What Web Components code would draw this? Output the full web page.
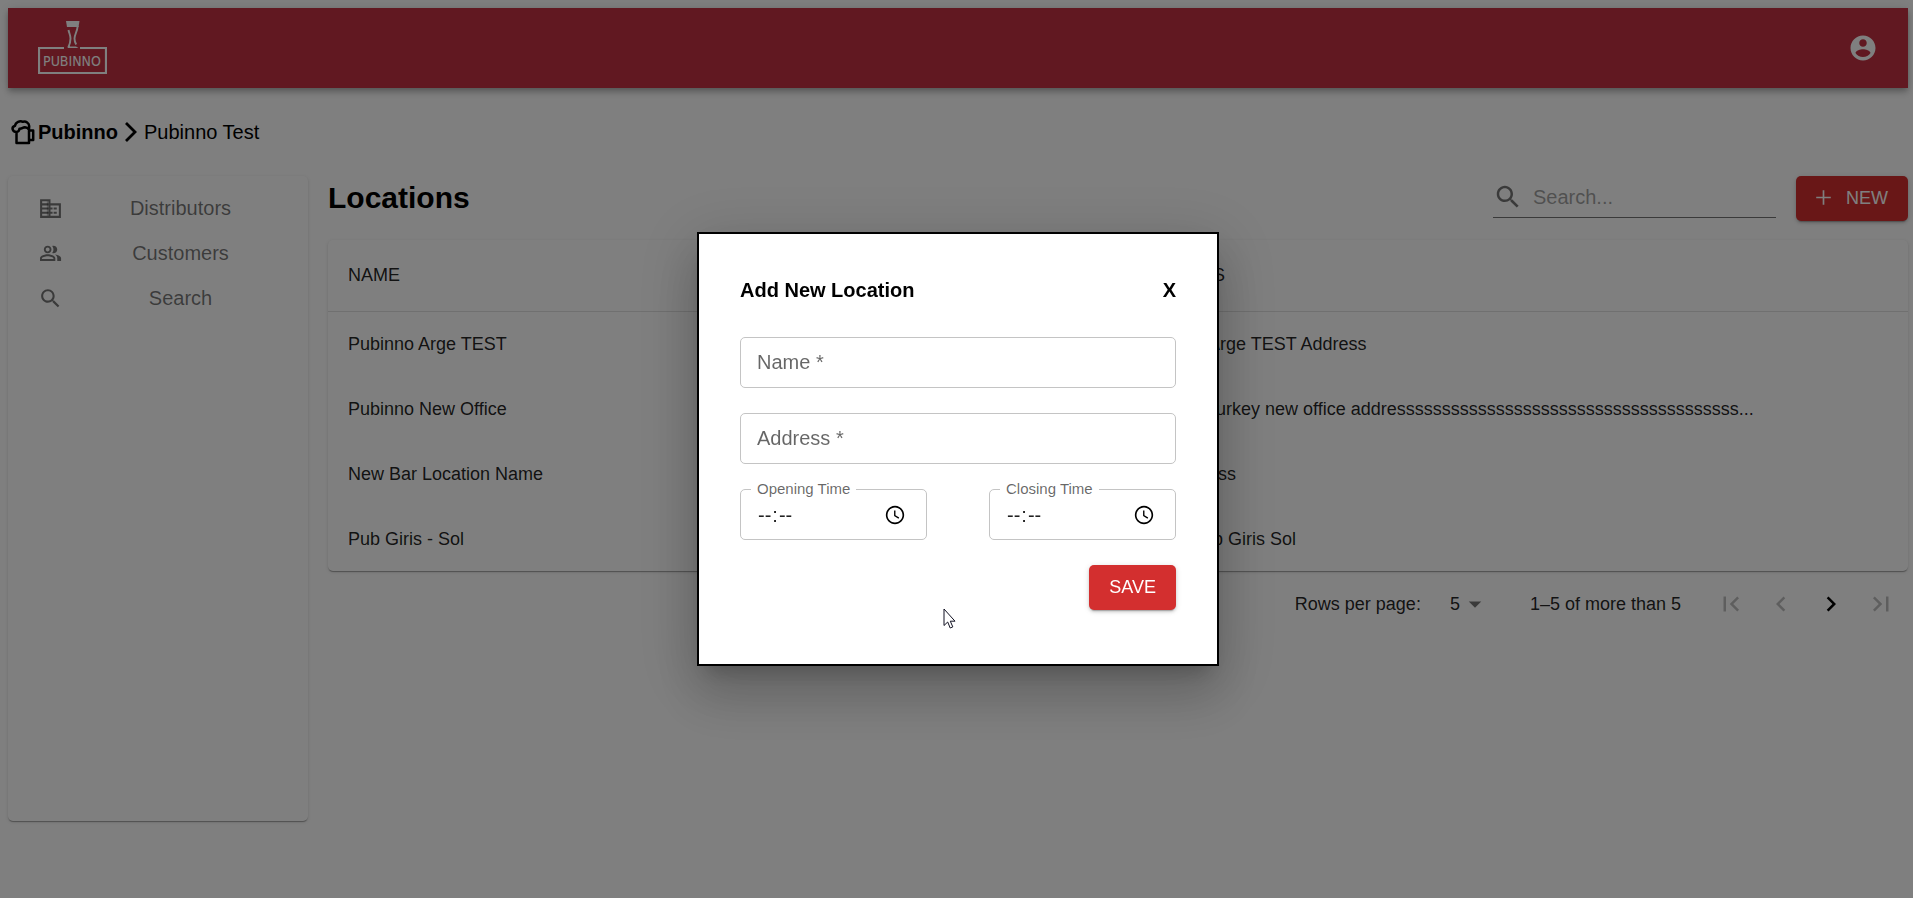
<!DOCTYPE html>
<html lang="en">
<head>
<meta charset="utf-8">
<meta name="viewport" content="width=device-width, initial-scale=1">
<title>Pubinno – Locations</title>
<style>
  html, body { margin: 0; height: 100%; }
  body { background: #fff; font-family: "Liberation Sans", Arial, sans-serif; color: rgba(0,0,0,.87); overflow: hidden; }
</style>
</head>
<body>
<pub-app>
  <pub-header slot="header"></pub-header>
  <pub-breadcrumb slot="crumbs" root="Pubinno" current="Pubinno Test"></pub-breadcrumb>
  <pub-sidebar slot="side">
    <pub-nav-item icon="business">Distributors</pub-nav-item>
    <pub-nav-item icon="people">Customers</pub-nav-item>
    <pub-nav-item icon="search">Search</pub-nav-item>
  </pub-sidebar>
  <pub-toolbar>Locations</pub-toolbar>
  <pub-locations></pub-locations>
  <pub-pagination></pub-pagination>
</pub-app>
<pub-modal heading="Add New Location">
  <pub-field label="Name *"></pub-field>
  <pub-field label="Address *"></pub-field>
  <pub-time-field slot="times" label="Opening Time"></pub-time-field>
  <pub-time-field slot="times" label="Closing Time"></pub-time-field>
  <pub-button slot="actions">SAVE</pub-button>
</pub-modal>
<pub-cursor></pub-cursor>

<script>
const ICONS = {
  business: '<path d="M12 7V3H2v18h20V7H12zM10 19H4v-2h6v2zm0-4H4v-2h6v2zm0-4H4V9h6v2zm0-4H4V5h6v2zm10 12h-8v-2h2v-2h-2v-2h2v-2h-2V9h8v10zm-2-8h-3v2h3v-2zm0 4h-3v2h3v-2z"/><path d="M8.500 5h1v14h-1z" opacity=".5"/>',
  people: '<path d="M16.67 13.13C18.04 14.06 19 15.32 19 17v3h4v-3c0-2.18-3.57-3.47-6.33-3.87zM15 12c2.21 0 4-1.79 4-4s-1.79-4-4-4c-.47 0-.91.1-1.33.24C14.5 5.27 15 6.58 15 8s-.5 2.73-1.33 3.76c.42.14.86.24 1.33.24zM9 12c2.21 0 4-1.79 4-4s-1.79-4-4-4-4 1.79-4 4 1.79 4 4 4zm0-6c1.1 0 2 .9 2 2s-.9 2-2 2-2-.9-2-2 .9-2 2-2zm0 7c-2.67 0-8 1.34-8 4v3h16v-3c0-2.66-5.33-4-8-4zm6 5H3v-.99C3.2 16.29 6.3 15 9 15s5.8 1.29 6 2v1z" transform="translate(1 .8) scale(.92)"/>',
  search: '<path d="M15.5 14h-.79l-.28-.27C15.41 12.59 16 11.11 16 9.5 16 5.91 13.09 3 9.5 3S3 5.91 3 9.5 5.91 16 9.5 16c1.61 0 3.09-.59 4.23-1.57l.27.28v.79l5 4.99L20.49 19l-4.99-5zm-6 0C7.01 14 5 11.99 5 9.5S7.01 5 9.5 5 14 7.01 14 9.5 11.99 14 9.5 14z"/>',
  account: '<path d="M12 2C6.48 2 2 6.48 2 12s4.48 10 10 10 10-4.48 10-10S17.52 2 12 2zm0 3c1.66 0 3 1.34 3 3s-1.34 3-3 3-3-1.34-3-3 1.34-3 3-3zm0 14.2c-2.5 0-4.71-1.28-6-3.22.03-1.99 4-3.08 6-3.08 1.99 0 5.97 1.09 6 3.08-1.29 1.94-3.5 3.22-6 3.22z"/>',
  add: '<path d="M19 12.800h-6.200v6.200h-1.600v-6.200H5v-1.600h6.200V5h1.600v6.200H19v1.600z"/>',
  drop: '<path d="M7 10l5 5 5-5z"/>',
  first: '<path d="M18.41 16.59L13.82 12l4.59-4.59L17 6l-6 6 6 6zM6 6h2v12H6z"/>',
  prev: '<path d="M15.41 16.59L10.830 12l4.580-4.590L14 6l-6 6 6 6z"/>',
  next: '<path d="M8.590 16.590L13.170 12 8.590 7.410 10 6l6 6-6 6z"/>',
  last: '<path d="M5.59 7.41L10.18 12l-4.59 4.59L7 18l6-6-6-6zM16 6h2v12h-2z"/>',
  clock: '<path d="M12 2C6.5 2 2 6.5 2 12s4.5 10 10 10 10-4.500 10-10S17.500 2 12 2zm0 18.200c-4.500 0-8.200-3.700-8.200-8.200S7.500 3.800 12 3.800s8.200 3.700 8.200 8.200-3.700 8.200-8.200 8.200zm.5-13.200H11v6l4.800 3 .8-1.200-4.100-2.500z"/>'
};
const icon = (name, size = 30) =>
  `<svg viewBox="0 0 24 24" width="${size}" height="${size}" fill="currentColor" aria-hidden="true">${ICONS[name]}</svg>`;

class Base extends HTMLElement {
  connectedCallback() {
    if (this.shadowRoot) return;
    this.attachShadow({ mode: 'open' }).innerHTML =
      `<style>*{box-sizing:border-box}svg{display:block;flex:none}button,input,select{font:inherit;color:inherit}${this.css()}</style>${this.html()}`;
  }
}

customElements.define('pub-app', class extends Base {
  css() { return `
    :host{display:block;padding:8px 5px 0 8px}
    .body{display:grid;grid-template-columns:300px minmax(0,1fr);gap:20px;align-items:start}
    .side{display:grid;min-height:645px}`; }
  html() { return `<slot name="header"></slot><slot name="crumbs"></slot>
    <div class="body"><div class="side"><slot name="side"></slot></div><main><slot></slot></main></div>`; }
});

customElements.define('pub-header', class extends Base {
  css() { return `
    :host{display:block}
    header{height:80px;padding:0 30px;display:flex;align-items:center;justify-content:space-between;background:#c33143;color:#fff;
      box-shadow:0 2px 5px -1px rgba(0,0,0,.2),0 5px 6px 0 rgba(0,0,0,.14),0 1px 12px 0 rgba(0,0,0,.12)}
    text{font:14px "Liberation Sans Narrow","DejaVu Sans Condensed",sans-serif}
    button{border:0;background:none;padding:0;cursor:pointer}`; }
  html() { return `<header>
    <svg viewBox="0 0 69 54" width="69" height="54" role="img" aria-label="Pubinno">
      <path d="M28 0h13.500l-1 6h-11.500z" fill="#fff"/>
      <path d="M39.700 5c-.5 6-3.200 8.500-3.200 12.500 0 2.800.5 4.200 1.700 6M30.500 9c.5 3 2 5 2 8.500 0 4-.8 6-2.200 8.800" fill="none" stroke="#fff" stroke-width="1.900"/>
      <path d="M29.500 27c1-2 2.500-3.500 2.500-1.500h6l2.500 1.500z" fill="#fff"/>
      <path d="M26 27H1v25h67V27H42" fill="none" stroke="#fff" stroke-width="2.200"/>
      <text x="34" y="45" text-anchor="middle" fill="#fff">PUBINNO</text>
    </svg>
    <button aria-label="Account">${icon('account')}</button></header>`; }
});

customElements.define('pub-breadcrumb', class extends Base {
  css() { return `
    :host{display:block}
    nav{display:flex;align-items:center;height:88px;padding-left:3px;font-size:20px;line-height:24px;color:#000}
    a{display:flex;align-items:center;gap:2px;font-weight:700;color:inherit;text-decoration:none}
    .sep{margin:0 7px}`; }
  html() { return `<nav aria-label="Breadcrumb">
    <a href="#"><svg viewBox="0 0 25 26" width="25" height="26" fill="none" stroke="#000" stroke-width="2.500" stroke-linejoin="round">
      <path d="M5.500 13v11h12.500V10.500M18 11.500h4.200v9.500H18M5.500 13c-4.500 0-5.300-5-1.500-6.200C4.500 3 9 1.200 12 2.800c3-.8 6 1.200 6.200 4.200l-.2 3.500M5.500 13c1.500 0 2.700-1 3-3.300 2.500.3 2.500-1.200 5.500-1.500 1.500 0 3 .8 4 2.300"/></svg>${this.getAttribute('root')}</a>
    <svg class="sep" viewBox="0 0 12 20" width="12" height="20" fill="none" stroke="#000" stroke-width="2.800"><path d="M1 1l9 9-9 9"/></svg>
    <span>${this.getAttribute('current')}</span></nav>`; }
});

customElements.define('pub-sidebar', class extends Base {
  css() { return `
    :host{display:block}
    nav{height:100%;padding:10px 0;border-radius:5px;background:#fff;
      box-shadow:0 2px 1px -1px rgba(0,0,0,.2),0 1px 1px 0 rgba(0,0,0,.14),0 1px 4px 0 rgba(0,0,0,.12)}`; }
  html() { return `<nav aria-label="Main"><slot></slot></nav>`; }
});

customElements.define('pub-nav-item', class extends Base {
  css() { return `
    :host{display:block}
    a{display:flex;align-items:center;height:45px;padding:0 10px 0 30px;color:rgba(0,0,0,.54);text-decoration:none;font-size:20px;line-height:24px}
    span{flex:1;padding-bottom:2px;text-align:center}`; }
  html() { return `<a href="#">${icon(this.getAttribute('icon'), 25)}<span><slot></slot></span></a>`; }
});

customElements.define('pub-button', class extends Base {
  css() { return `
    :host{display:inline-block}
    button{display:flex;align-items:center;gap:10px;height:45px;padding:0 20px 2px;border:0;border-radius:5px;background:#d32f2f;color:#fff;font-size:18px;line-height:24px;cursor:pointer;
      box-shadow:0 3px 1px -2px rgba(0,0,0,.2),0 2px 3px 0 rgba(0,0,0,.14),0 1px 6px 0 rgba(0,0,0,.12)}
    svg{margin-left:-5px}`; }
  html() { return `<button>${this.hasAttribute('icon') ? icon(this.getAttribute('icon'), 25) : ''}<slot></slot></button>`; }
});

customElements.define('pub-toolbar', class extends Base {
  css() { return `
    :host{display:flex;align-items:flex-start;gap:20px;height:45px}
    h1{flex:1;margin:0;font-size:30px;line-height:43px;color:#000}
    label{display:flex;align-items:center;gap:10px;width:283px;height:42px;border-bottom:1px solid rgba(0,0,0,.54);color:rgba(0,0,0,.54)}
    input{flex:1;min-width:0;border:0;outline:0;background:none;padding:0;font-size:20px;line-height:24px}
    input::placeholder{color:#000;opacity:.37}`; }
  html() { return `<h1><slot></slot></h1>
    <label>${icon('search')}<input type="search" placeholder="Search..." aria-label="Search locations"></label>
    <pub-button icon="add">NEW</pub-button>`; }
});

customElements.define('pub-locations', class extends Base {
  css() { return `
    :host{display:block;margin-top:19px;border-radius:5px;background:#fff;
      box-shadow:0 2px 1px -1px rgba(0,0,0,.2),0 1px 1px 0 rgba(0,0,0,.14),0 1px 4px 0 rgba(0,0,0,.12)}
    table{width:100%;border-collapse:collapse;table-layout:fixed;font-size:18px;line-height:24px;color:rgba(0,0,0,.87)}
    th,td{padding:0 20px;text-align:left;font-weight:400;white-space:nowrap;height:65px}
    th{height:71px;border-bottom:1px solid #e0e0e0}`; }
  html() {
    const rows = [
      ['Pubinno Arge TEST', 'Pubinno Arge TEST Address'],
      ['Pubinno New Office', 'Istanbul Turkey new office addre' + 's'.repeat(38) + '...'],
      ['New Bar Location Name', 'Bar Address'],
      ['Pub Giris - Sol', 'Demo Pub Giris Sol']];
    return `<table><thead><tr><th scope="col">NAME</th><th scope="col">ADDRESS</th></tr></thead><tbody>${
      rows.map(r => `<tr><td>${r[0]}</td><td>${r[1]}</td></tr>`).join('')}</tbody></table>`;
  }
});

customElements.define('pub-pagination', class extends Base {
  css() { return `
    :host{display:flex;align-items:center;justify-content:flex-end;height:65px;padding-right:2px;font-size:18px;line-height:24px}
    label{display:flex;align-items:center;gap:29px}
    .sel{display:grid;align-items:center;width:40px;margin-right:40px}
    select{grid-area:1/1;appearance:none;border:0;background:none;padding:0;outline:0}
    .sel svg{grid-area:1/1;justify-self:end;color:rgba(0,0,0,.54);pointer-events:none}
    .pages{display:flex;margin-left:25px}
    button{display:grid;place-items:center;width:50px;height:50px;border:0;background:none;padding:0;color:#000}
    button:disabled{color:rgba(0,0,0,.26)}`; }
  html() { return `<label>Rows per page:<span class="sel"><select><option>5</option></select>${icon('drop')}</span></label>
    <span>1–5 of more than 5</span>
    <div class="pages"><button disabled aria-label="First page">${icon('first')}</button><button disabled aria-label="Previous page">${icon('prev')}</button><button aria-label="Next page">${icon('next')}</button><button disabled aria-label="Last page">${icon('last')}</button></div>`; }
});

customElements.define('pub-modal', class extends Base {
  css() { return `
    :host{position:fixed;inset:0;display:grid;place-items:center;padding-left:3px;background:rgba(0,0,0,.5)}
    section{width:522px;padding:41px;background:#fff;color:#000;border:2px solid #000;
      box-shadow:0 14px 19px -9px rgba(0,0,0,.2),0 30px 48px 4px rgba(0,0,0,.14),0 11px 58px 10px rgba(0,0,0,.12)}
    header{display:flex;align-items:center;justify-content:space-between;height:30px;margin-bottom:32px}
    h2,header button{margin:0;font-size:20px;line-height:30px;font-weight:700}
    header button{border:0;background:none;padding:0;cursor:pointer}
    form{display:grid;gap:25px}
    .times{display:flex;justify-content:space-between}
    .actions{display:flex;justify-content:flex-end;margin-bottom:13px}`; }
  html() { return `<section role="dialog" aria-modal="true" aria-labelledby="t">
    <header><h2 id="t">${this.getAttribute('heading')}</h2><button aria-label="Close">X</button></header>
    <form><slot></slot><div class="times"><slot name="times"></slot></div><div class="actions"><slot name="actions"></slot></div></form></section>`; }
});

customElements.define('pub-field', class extends Base {
  css() { return `
    :host{display:block}
    input{display:block;width:100%;height:51px;padding:0 16px;border:1px solid #c4c4c4;border-radius:5px;background:none;outline:0;font-size:20px;line-height:24px}
    input::placeholder{color:rgba(0,0,0,.6);opacity:1}`; }
  html() { const l = this.getAttribute('label'); return `<input type="text" required placeholder="${l}" aria-label="${l}">`; }
});

customElements.define('pub-time-field', class extends Base {
  css() { return `
    :host{display:block;position:relative;width:187px}
    label{position:absolute;top:-9px;left:11px;padding:0 6px;background:#fff;color:rgba(0,0,0,.6);font-size:15px;line-height:17px}
    .box{display:flex;align-items:center;height:51px;padding:0 20px 0 16px;border:1px solid #c4c4c4;border-radius:5px;color:rgba(0,0,0,.87)}
    input{flex:1;min-width:0;border:0;outline:0;background:none;padding:0;font-size:20px;line-height:24px}
    input::-webkit-calendar-picker-indicator,input::-webkit-datetime-edit-ampm-field{display:none}
    svg{color:#000}`; }
  html() { return `<label for="time">${this.getAttribute('label')}</label>
    <div class="box"><input id="time" type="time">${icon('clock', 22)}</div>`; }
});

customElements.define('pub-cursor', class extends Base {
  css() { return `:host{position:fixed;left:943px;top:608px;pointer-events:none}`; }
  html() { return `<svg viewBox="0 0 13 21" width="13" height="21"><path d="M1 1v16.500l3.700-3.500 2.500 6 2.600-1.100-2.500-5.700H12z" fill="#fff" stroke="#112" stroke-width="1"/></svg>`; }
});
</script>
</body>
</html>
